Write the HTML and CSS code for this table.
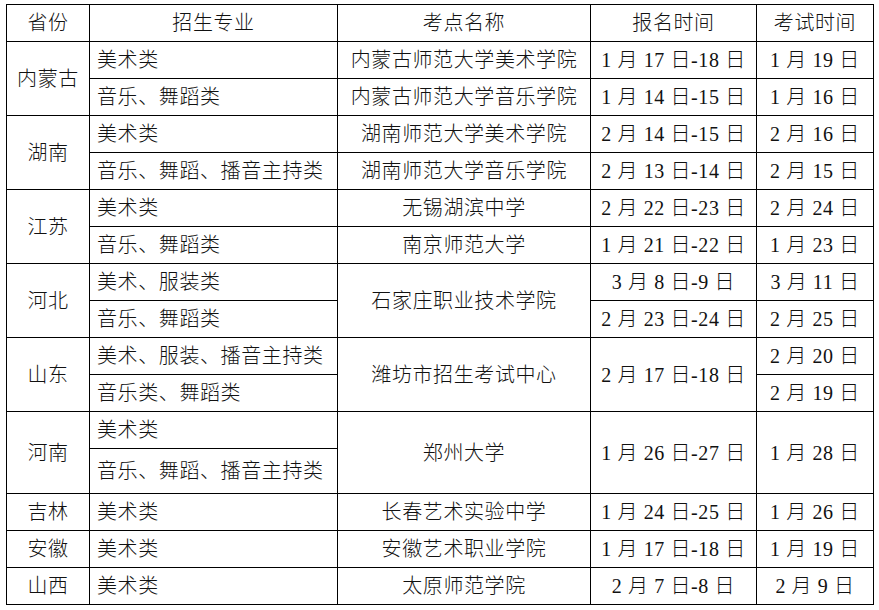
FILE: index.html
```html
<!DOCTYPE html>
<html lang="zh">
<head>
<meta charset="utf-8">
<title>艺术类专业考点安排</title>
<link rel="stylesheet" href="styles.css">
</head>
<body>
<table class="sched">
  <colgroup>
    <col class="c-prov">
    <col class="c-major">
    <col class="c-site">
    <col class="c-reg">
    <col class="c-exam">
  </colgroup>
  <thead>
    <tr>
      <th>省份</th>
      <th>招生专业</th>
      <th>考点名称</th>
      <th>报名时间</th>
      <th>考试时间</th>
    </tr>
  </thead>
  <tbody>
    <tr>
      <td class="prov" rowspan="2">内蒙古</td>
      <td class="major">美术类</td>
      <td>内蒙古师范大学美术学院</td>
      <td>1 月 17 日-18 日</td>
      <td>1 月 19 日</td>
    </tr>
    <tr>
      <td class="major">音乐、舞蹈类</td>
      <td>内蒙古师范大学音乐学院</td>
      <td>1 月 14 日-15 日</td>
      <td>1 月 16 日</td>
    </tr>
    <tr>
      <td class="prov" rowspan="2">湖南</td>
      <td class="major">美术类</td>
      <td>湖南师范大学美术学院</td>
      <td>2 月 14 日-15 日</td>
      <td>2 月 16 日</td>
    </tr>
    <tr>
      <td class="major">音乐、舞蹈、播音主持类</td>
      <td>湖南师范大学音乐学院</td>
      <td>2 月 13 日-14 日</td>
      <td>2 月 15 日</td>
    </tr>
    <tr>
      <td class="prov" rowspan="2">江苏</td>
      <td class="major">美术类</td>
      <td>无锡湖滨中学</td>
      <td>2 月 22 日-23 日</td>
      <td>2 月 24 日</td>
    </tr>
    <tr>
      <td class="major">音乐、舞蹈类</td>
      <td>南京师范大学</td>
      <td>1 月 21 日-22 日</td>
      <td>1 月 23 日</td>
    </tr>
    <tr>
      <td class="prov" rowspan="2">河北</td>
      <td class="major">美术、服装类</td>
      <td rowspan="2">石家庄职业技术学院</td>
      <td>3 月 8 日-9 日</td>
      <td>3 月 11 日</td>
    </tr>
    <tr>
      <td class="major">音乐、舞蹈类</td>
      <td>2 月 23 日-24 日</td>
      <td>2 月 25 日</td>
    </tr>
    <tr>
      <td class="prov" rowspan="2">山东</td>
      <td class="major">美术、服装、播音主持类</td>
      <td rowspan="2">潍坊市招生考试中心</td>
      <td rowspan="2">2 月 17 日-18 日</td>
      <td>2 月 20 日</td>
    </tr>
    <tr>
      <td class="major">音乐类、舞蹈类</td>
      <td>2 月 19 日</td>
    </tr>
    <tr>
      <td class="prov" rowspan="2">河南</td>
      <td class="major">美术类</td>
      <td rowspan="2">郑州大学</td>
      <td rowspan="2">1 月 26 日-27 日</td>
      <td rowspan="2">1 月 28 日</td>
    </tr>
    <tr class="tall">
      <td class="major">音乐、舞蹈、播音主持类</td>
    </tr>
    <tr>
      <td class="prov">吉林</td>
      <td class="major">美术类</td>
      <td>长春艺术实验中学</td>
      <td>1 月 24 日-25 日</td>
      <td>1 月 26 日</td>
    </tr>
    <tr>
      <td class="prov">安徽</td>
      <td class="major">美术类</td>
      <td>安徽艺术职业学院</td>
      <td>1 月 17 日-18 日</td>
      <td>1 月 19 日</td>
    </tr>
    <tr>
      <td class="prov">山西</td>
      <td class="major">美术类</td>
      <td>太原师范学院</td>
      <td>2 月 7 日-8 日</td>
      <td>2 月 9 日</td>
    </tr>
  </tbody>
</table>
</body>
</html>
```

FILE: styles.css
```css
html, body {
  margin: 0;
  padding: 0;
  background: #fff;
}

.sched {
  margin: 4px 0 0 6px;
  width: 868px;
  table-layout: fixed;
  border-collapse: collapse;
  font-family: "Liberation Serif", "Noto Sans CJK SC", serif;
  font-size: 20px;
  color: #111;
}

.c-prov { width: 83px; }
.c-major { width: 248px; }
.c-site { width: 253px; }
.c-reg { width: 166px; }
.c-exam { width: 117px; }

.sched tr {
  height: 37px;
}

.sched tr.tall {
  height: 45px;
}

.sched th,
.sched td {
  border: 1px solid #000;
  padding: 0;
  text-align: center;
  vertical-align: middle;
  font-weight: 300;
  letter-spacing: 0.6px;
  line-height: 22px;
  white-space: nowrap;
}

.sched td.major {
  text-align: left;
  padding-left: 7px;
}
```
